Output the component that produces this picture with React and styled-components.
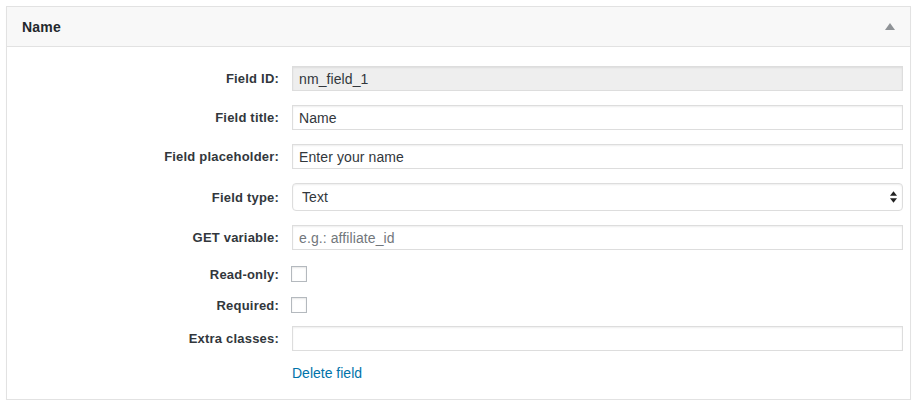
import React from 'react';
import styled, { createGlobalStyle } from 'styled-components';

const GlobalStyle = createGlobalStyle`
	body {
		margin: 0;
		background: #fff;
		font-family: 'Liberation Sans', Arial, sans-serif;
		color: #23282d;
	}
`;

const fields = [
	{ label: 'Field ID:', kind: 'text', value: 'nm_field_1', readOnly: true, mt: 19 },
	{ label: 'Field title:', kind: 'text', value: 'Name', mt: 14 },
	{ label: 'Field placeholder:', kind: 'text', value: 'Enter your name', mt: 14 },
	{ label: 'Field type:', kind: 'select', value: 'Text', mt: 14 },
	{ label: 'GET variable:', kind: 'text', placeholder: 'e.g.: affiliate_id', mt: 14 },
	{ label: 'Read-only:', kind: 'checkbox', mt: 16 },
	{ label: 'Required:', kind: 'checkbox', mt: 15 },
	{ label: 'Extra classes:', kind: 'text', value: '', mt: 13 },
];

export default function App() {
	return (
		<>
			<GlobalStyle />
			<Page>
				<Panel>
					<Header>
						<Title>Name</Title>
						<Toggle viewBox='0 0 10 7' aria-hidden='true'>
							<path d='M5 0 L10 7 L0 7 Z' fill='#8f9397' />
						</Toggle>
					</Header>
					<Body>
						{fields.map((field) => (
							<Row key={field.label} $mt={field.mt}>
								<Label>{field.label}</Label>
								<Control>
									{field.kind === 'text' && (
										<TextInput
											type='text'
											defaultValue={field.value}
											placeholder={field.placeholder}
											readOnly={field.readOnly}
											$readOnly={field.readOnly}
										/>
									)}
									{field.kind === 'select' && (
										<SelectBox>
											<span>{field.value}</span>
											<Arrows viewBox='0 0 8 13' aria-hidden='true'>
												<path d='M4 0 L8 5 L0 5 Z' fill='#222' />
												<path d='M0 8 L8 8 L4 13 Z' fill='#222' />
											</Arrows>
										</SelectBox>
									)}
									{field.kind === 'checkbox' && <Checkbox type='checkbox' />}
								</Control>
							</Row>
						))}
						<Row $mt={13}>
							<Label />
							<Control>
								<DeleteLink href='#'>Delete field</DeleteLink>
							</Control>
						</Row>
					</Body>
				</Panel>
			</Page>
		</>
	);
}

const Page = styled.div`
	padding: 6px 12px 0 6px;
`;

const Panel = styled.div`
	width: 903px;
	border: 1px solid #e2e2e2;
	box-shadow: 0 1px 1px rgba(0, 0, 0, 0.04);
	background: #fff;
`;

const Header = styled.div`
	display: flex;
	align-items: center;
	justify-content: space-between;
	height: 39px;
	padding: 0 15px 0 15px;
	background: #f8f8f8;
	border-bottom: 1px solid #e2e2e2;
`;

const Title = styled.h2`
	margin: 0;
	font-size: 14px;
	font-weight: 700;
	letter-spacing: 0.2px;
	color: #23282d;
`;

const Toggle = styled.svg`
	width: 10px;
	height: 7px;
	margin-top: -1px;
`;

const Body = styled.div`
	padding: 0 7px 17px 0;
`;

const Row = styled.div`
	display: flex;
	align-items: center;
	margin-top: ${(p) => p.$mt}px;
`;

const Label = styled.div`
	width: 272px;
	flex: none;
	padding-right: 13px;
	text-align: right;
	font-size: 13px;
	font-weight: 700;
	letter-spacing: 0.2px;
	color: #32373c;
`;

const Control = styled.div`
	flex: 1;
	display: flex;
	align-items: center;
`;

const TextInput = styled.input`
	box-sizing: border-box;
	width: 100%;
	height: 25px;
	margin: 0;
	padding: 2px 6px;
	border: 1px solid #ddd;
	border-radius: 0;
	box-shadow: inset 0 1px 2px rgba(0, 0, 0, 0.07);
	background: ${(p) => (p.$readOnly ? '#eee' : '#fff')};
	font-family: 'Liberation Sans', Arial, sans-serif;
	font-size: 14px;
	letter-spacing: 0.1px;
	color: #32373c;
	outline: none;

	&::placeholder {
		color: #72777c;
	}
`;

const SelectBox = styled.div`
	box-sizing: border-box;
	display: flex;
	align-items: center;
	justify-content: space-between;
	width: 100%;
	height: 28px;
	padding: 0 5px 0 9px;
	border: 1px solid #ddd;
	border-radius: 4px;
	box-shadow: inset 0 1px 2px rgba(0, 0, 0, 0.07);
	background: #fff;
	font-size: 14px;
	letter-spacing: 0.1px;
	color: #32373c;
`;

const Arrows = styled.svg`
	width: 7px;
	height: 12px;
`;

const Checkbox = styled.input`
	appearance: none;
	box-sizing: border-box;
	width: 16px;
	height: 16px;
	margin: 0 0 0 -1px;
	border: 1px solid #b4b9be;
	background: #fff;
	box-shadow: inset 0 1px 2px rgba(0, 0, 0, 0.1);
`;

const DeleteLink = styled.a`
	font-size: 14px;
	line-height: 18px;
	color: #0073aa;
	text-decoration: none;
`;
